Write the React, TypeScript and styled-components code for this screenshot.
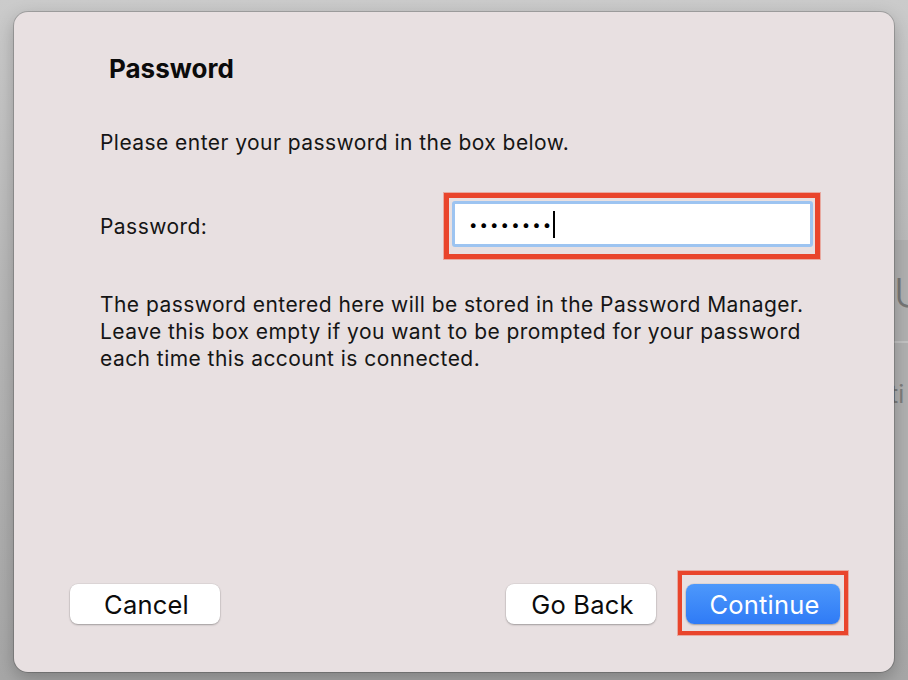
import React from "react";
import styled, { createGlobalStyle } from "styled-components";

const Global = createGlobalStyle`
  html, body {
    margin: 0;
    padding: 0;
    width: 908px;
    height: 680px;
    overflow: hidden;
  }
  body {
    font-family: Inter, "Noto Sans", "Liberation Sans", sans-serif;
    -webkit-font-smoothing: antialiased;
  }
`;

const Desktop = styled.div`
  position: relative;
  width: 908px;
  height: 680px;
  background: linear-gradient(180deg, #cbcbcb 0%, #b9b9b9 40%, #a7a7a7 100%);
  padding: 12px 14px 8px 14px;
  box-sizing: border-box;
  display: flex;
`;

const BackWindow = styled.div`
  position: absolute;
  left: 860px;
  top: 240px;
  width: 48px;
  height: 260px;
  background: #b1b1b1;
  display: flex;
  flex-direction: column;
  color: #6f6f6f;
`;

const BackTitle = styled.div`
  font-size: 40px;
  line-height: 50px;
  padding: 28px 0 0 34px;
  color: #777;
  font-weight: 300;
`;

const BackRule = styled.div`
  height: 2px;
  background: #c3c3c3;
  margin-top: 23px;
`;

const BackLabel = styled.div`
  font-size: 25px;
  line-height: 30px;
  padding: 36px 0 0 30px;
  color: #7e7e7e;
  white-space: nowrap;
`;

const Dialog = styled.div`
  position: relative;
  z-index: 1;
  flex: 1;
  background: #e8e0e1;
  border-radius: 14px;
  box-shadow: 0 0 0 1px rgba(0, 0, 0, 0.18), 0 6px 18px rgba(0, 0, 0, 0.25);
  display: flex;
  flex-direction: column;
  padding: 43px 54px 48px 86px;
  box-sizing: border-box;
  color: #111;
`;

const Title = styled.h1`
  margin: 0 0 0 9px;
  font-size: 26px;
  line-height: 28px;
  font-weight: 700;
  color: #0b0b0b;
`;

const Text = styled.p<{ $top: number }>`
  margin: ${(p) => p.$top}px 0 0 0;
  font-size: 21px;
  line-height: 27px;
  letter-spacing: 0.45px;
  font-weight: 400;
  color: #151515;
`;

const FieldRow = styled.div`
  margin-top: 37px;
  display: flex;
  align-items: center;
  justify-content: space-between;
  padding-right: 20px;
`;

const Label = styled.label`
  font-size: 21px;
  line-height: 27px;
  letter-spacing: 0.45px;
  color: #151515;
`;

const Highlight = styled.div`
  border: 5px solid #e9452c;
  box-shadow: 0 0 0 1px rgba(233, 69, 44, 0.35);
  padding: 3px 2px 7px 3px;
  width: 376px;
  box-sizing: border-box;
`;

const Input = styled.div`
  height: 46px;
  box-sizing: border-box;
  background: #fff;
  border: 3px solid #9dc4f1;
  border-radius: 3px;
  display: flex;
  align-items: center;
  padding-left: 14px;
`;

const Dots = styled.span`
  font-size: 15px;
  letter-spacing: 2.1px;
  color: #000;
  line-height: 1;
`;

const Caret = styled.span`
  width: 2px;
  height: 27px;
  background: #000;
`;

const Footer = styled.div`
  margin-top: auto;
  margin-left: -30px;
  display: flex;
  align-items: center;
`;

const Spacer = styled.div`
  flex: 1;
`;

const Button = styled.button<{ $primary?: boolean }>`
  height: 40px;
  width: ${(p) => (p.$primary ? 154 : 150)}px;
  border: none;
  border-radius: 8px;
  font-family: inherit;
  font-size: 25.5px;
  letter-spacing: 0.2px;
  font-weight: 400;
  color: ${(p) => (p.$primary ? "#fff" : "#0b0b0b")};
  background: ${(p) =>
    p.$primary ? "linear-gradient(180deg, #4d98fb 0%, #2f7bf6 100%)" : "#ffffff"};
  box-shadow: 0 1px 2px rgba(0, 0, 0, 0.28), 0 0 0 0.5px rgba(0, 0, 0, 0.08);
  padding: 0 0 0 3px;
  cursor: default;
`;

const PrimaryWrap = styled.div`
  position: relative;
  margin-left: 30px;
  &::after {
    content: "";
    position: absolute;
    left: -8px;
    right: -8px;
    top: -13px;
    bottom: -11px;
    border: 4.5px solid #e9452c;
    box-shadow: 0 0 0 1px rgba(233, 69, 44, 0.35);
    pointer-events: none;
  }
`;

export default function App() {
  return (
    <>
      <Global />
      <Desktop>
        <BackWindow>
          <BackTitle>U</BackTitle>
          <BackRule />
          <BackLabel>ti</BackLabel>
        </BackWindow>
        <Dialog>
          <Title>Password</Title>
          <Text $top={46}>Please enter your password in the box below.</Text>
          <FieldRow>
            <Label>Password:</Label>
            <Highlight>
              <Input>
                <Dots>••••••••</Dots>
                <Caret />
              </Input>
            </Highlight>
          </FieldRow>
          <Text $top={32}>
            The password entered here will be stored in the Password Manager.
            <br />
            Leave this box empty if you want to be prompted for your password
            <br />
            each time this account is connected.
          </Text>
          <Footer>
            <Button>Cancel</Button>
            <Spacer />
            <Button>Go Back</Button>
            <PrimaryWrap>
              <Button $primary>Continue</Button>
            </PrimaryWrap>
          </Footer>
        </Dialog>
      </Desktop>
    </>
  );
}
